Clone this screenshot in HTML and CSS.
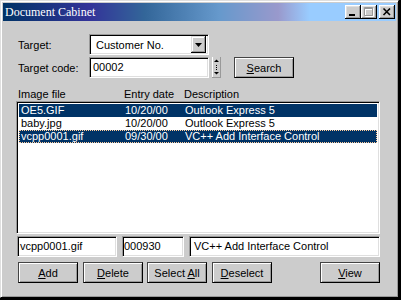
FILE: index.html
```html
<!DOCTYPE html>
<html lang="en">
<head>
    <meta charset="UTF-8">
    <title>Document Cabinet</title>
    <link rel="stylesheet" href="styles.css">
</head>
<body>
<div class="window">
    <div class="titlebar">
        <span class="title">Document Cabinet</span>
        <div class="caption">
            <span class="cbtn"><svg width="16" height="14"><rect x="4" y="9" width="6" height="2" fill="#000"/></svg></span>
            <span class="cbtn"><svg width="16" height="14"><path d="M4.5 3.5h8v8h-8z M4 4.5h9" fill="none" stroke="#fff"/><path d="M3.5 2.5h8v8h-8z M3 3.5h9" fill="none" stroke="#999"/></svg></span>
            <span class="cbtn close"><svg width="16" height="14"><path d="M4.5 3.5L11 10M11 3.5L4.5 10" stroke="#000" stroke-width="1.6"/></svg></span>
        </div>
    </div>

    <div class="client">
        <div class="field-row">
            <span class="field-label">Target:</span>
            <div class="combo">
                <span class="combo-text">Customer No.</span>
                <span class="combo-btn"><svg width="7" height="4"><polygon points="0,0 7,0 3.5,4" fill="#000"/></svg></span>
            </div>
        </div>
        <div class="field-row row-gap">
            <span class="field-label">Target code:</span>
            <div class="edit code">00002</div>
            <span class="spin"><svg width="9" height="21">
                <rect x="0" y="0" width="1" height="21" fill="#fff"/>
                <rect x="8" y="0" width="1" height="21" fill="#999"/>
                <rect x="0" y="20" width="9" height="1" fill="#999"/>
                <polygon points="2,5 7,5 4.5,2.5" fill="#000"/>
                <rect x="4" y="8" width="1" height="1" fill="#000"/>
                <rect x="4" y="10" width="1" height="1" fill="#000"/>
                <rect x="4" y="12" width="1" height="1" fill="#000"/>
                <polygon points="2,15 7,15 4.5,17.5" fill="#000"/>
            </svg></span>
            <button class="btn search"><u>S</u>earch</button>
        </div>

        <div class="list-head">
            <span>Image file</span>
            <span>Entry date</span>
            <span>Description</span>
        </div>
        <div class="listbox">
            <div class="list-row selected"><span>OE5.GIF</span><span>10/20/00</span><span>Outlook Express 5</span></div>
            <div class="list-row"><span>baby.jpg</span><span>10/20/00</span><span>Outlook Express 5</span></div>
            <div class="list-row selected focused"><span>vcpp0001.gif</span><span>09/30/00</span><span>VC++ Add Interface Control</span></div>
        </div>

        <div class="detail-row">
            <div class="edit file">vcpp0001.gif</div>
            <div class="edit date">000930</div>
            <div class="edit desc">VC++ Add Interface Control</div>
        </div>

        <div class="button-row">
            <button class="btn"><u>A</u>dd</button>
            <button class="btn"><u>D</u>elete</button>
            <button class="btn btn-tight">Select <u>A</u>ll</button>
            <button class="btn"><u>D</u>eselect</button>
            <button class="btn btn-view"><u>V</u>iew</button>
        </div>
    </div>
</div>
</body>
</html>
```

FILE: styles.css
```css
body {
    margin: 0;
    background-color: #000;
    font-family: "Liberation Sans", Arial, sans-serif;
    font-size: 11px;
    color: #000;
}
.window {
    width: 399px;
    height: 298px;
    box-sizing: border-box;
    padding: 2px;
    background-color: #ccc;
    border: 1px solid;
    border-color: #dfdfdf #000 #000 #dfdfdf;
    box-shadow: inset 1px 1px #fff, inset -1px -1px #999;
}
.titlebar {
    height: 18px;
    display: flex;
    align-items: center;
    justify-content: space-between;
    background: linear-gradient(to right, #003366 0%, #333399 22%, #336699 36%, #6699cc 55%, #9999cc 70%, #99ccff 78%, #99ccff 100%);
}
.title {
    padding-left: 2px;
    color: #fff;
    font-family: "Liberation Serif", "Times New Roman", serif;
    font-size: 12px;
    line-height: 18px;
}
.caption {
    display: flex;
    margin-right: 1px;
}
.cbtn {
    width: 16px;
    height: 14px;
    background-color: #ccc;
    box-shadow: inset -1px -1px #000, inset 1px 1px #fff, inset -2px -2px #999, inset 2px 2px #dfdfdf;
}
.cbtn svg {
    display: block;
}
.close {
    margin-left: 2px;
}
.client {
    padding: 13px 0 0 13px;
}
.field-row {
    display: flex;
    align-items: center;
    height: 21px;
}
.row-gap {
    margin-top: 2px;
}
.field-label {
    width: 71px;
    margin-left: 2px;
}
.combo,
.edit,
.listbox {
    box-sizing: border-box;
    background-color: #fff;
    border: 1px solid;
    border-color: #999 #fff #fff #999;
    box-shadow: inset 1px 1px #000, inset -1px -1px #dfdfdf;
}
.combo {
    width: 120px;
    height: 21px;
    display: flex;
    align-items: center;
    justify-content: space-between;
    padding: 2px;
}
.combo-text {
    padding-left: 4px;
}
.combo-btn {
    width: 15px;
    height: 17px;
    display: flex;
    align-items: center;
    justify-content: center;
    background-color: #ccc;
    box-shadow: inset -1px -1px #000, inset 1px 1px #dfdfdf, inset -2px -2px #999, inset 2px 2px #fff;
}
.combo-btn svg {
    display: block;
}
.edit {
    height: 21px;
    padding: 0 0 0 2px;
    line-height: 19px;
    white-space: nowrap;
}
.code {
    width: 120px;
    padding-left: 3px;
}
.spin {
    margin-left: 3px;
    height: 21px;
}
.spin svg {
    display: block;
}
.btn {
    box-sizing: border-box;
    width: 60px;
    height: 21px;
    padding: 0;
    font-family: inherit;
    font-size: 11px;
    color: #000;
    background-color: #ccc;
    border: 1px solid;
    border-color: #444 #000 #000 #444;
    box-shadow: inset 1px 1px #fff, inset -1px -1px #999;
}
.search {
    margin-left: 13px;
}
.list-head {
    display: grid;
    grid-template-columns: 106px 60px 1fr;
    margin-top: 9px;
    height: 14px;
    line-height: 14px;
    padding-left: 2px;
}
.listbox {
    width: 364px;
    height: 133px;
    padding: 2px;
}
.list-row {
    display: grid;
    grid-template-columns: 104px 60px 1fr;
    height: 13px;
    line-height: 13px;
    padding-left: 2px;
    white-space: nowrap;
}
.selected {
    background-color: #003366;
    color: #fff;
}
.focused {
    outline: 1px dotted #ffcc99;
    outline-offset: -1px;
}
.detail-row {
    display: flex;
    margin-top: 2px;
    height: 21px;
}
.file {
    width: 100px;
    margin-left: 1px;
}
.date {
    width: 62px;
    margin-left: 5px;
    padding-left: 1px;
}
.desc {
    width: 191px;
    margin-left: 5px;
    padding-left: 4px;
}
.button-row {
    display: flex;
    margin-top: 5px;
    padding-left: 2px;
}
.button-row .btn + .btn {
    margin-left: 5px;
}
.button-row .btn + .btn-tight {
    margin-left: 4px;
}
.button-row .btn + .btn-view {
    margin-left: 48px;
}
```
